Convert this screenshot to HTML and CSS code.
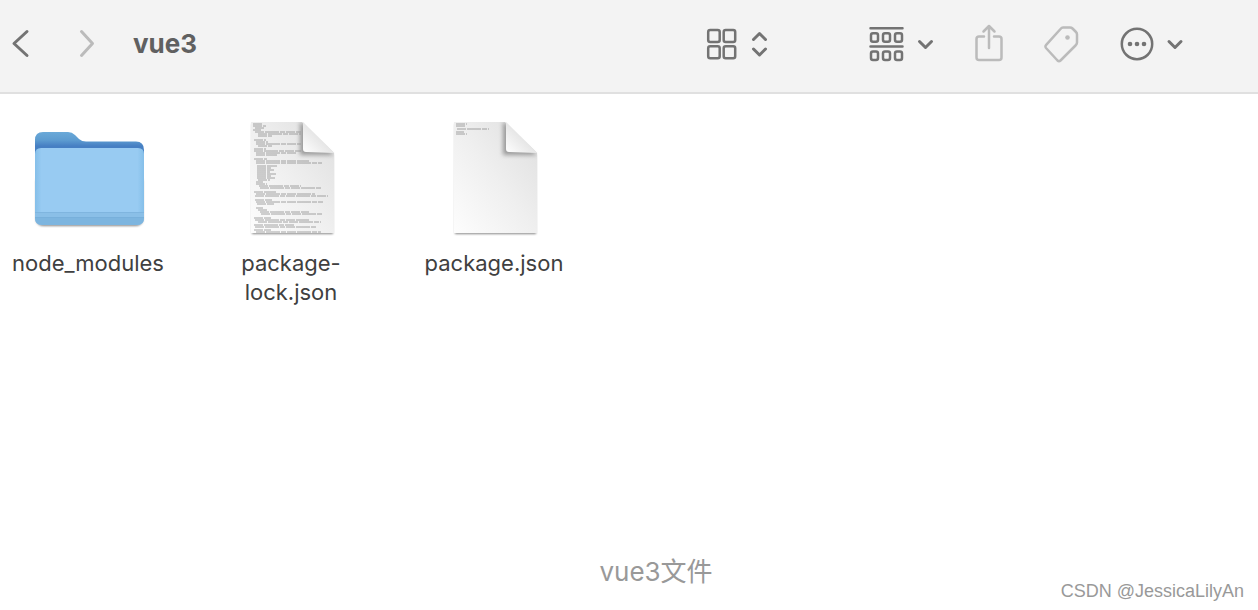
FILE: index.html
```html
<!DOCTYPE html>
<html lang="zh">
    <head>
        <meta charset="utf-8">
        <title>vue3</title>
        <link rel="stylesheet" href="styles.css">
    </head>
    <body>
        <header class="toolbar">
            <nav class="history">
                <button class="tool" aria-label="Back">
                    <svg width="22" height="32" viewBox="0 0 22 32"><path d="M19 3.500L6 15.500L19 27.500"/></svg>
                </button>
                <button class="tool dim" aria-label="Forward">
                    <svg width="22" height="32" viewBox="0 0 22 32"><path d="M5.500 3.500L16.500 15.500L5.500 27.500"/></svg>
                </button>
            </nav>
            <h1 class="title">vue3</h1>
            <div class="actions">
                <button class="tool view" aria-label="View">
                    <svg width="32" height="36" viewBox="0 0 32 36">
                        <rect x="2.200" y="4" width="11.500" height="12" rx="2"/>
                        <rect x="17.700" y="4" width="11.500" height="12" rx="2"/>
                        <rect x="2.200" y="20.200" width="11.500" height="12" rx="2"/>
                        <rect x="17.700" y="20.200" width="11.500" height="12" rx="2"/>
                    </svg>
                    <svg class="arrow" width="18" height="36" viewBox="0 0 18 36"><path d="M3.500 13.500L9.500 7.500L15.500 13.500M3.500 23L9.500 29L15.500 23"/></svg>
                </button>
                <button class="tool group" aria-label="Group">
                    <svg width="36" height="40" viewBox="0 0 36 40">
                        <path d="M2.500 4.200H34.500M2.500 22.400H34.500"/>
                        <rect x="3" y="9.200" width="7" height="8.500" rx="2"/>
                        <rect x="15" y="9.200" width="7" height="8.500" rx="2"/>
                        <rect x="27" y="9.200" width="7" height="8.500" rx="2"/>
                        <rect x="3" y="27.400" width="7" height="8.500" rx="2"/>
                        <rect x="15" y="27.400" width="7" height="8.500" rx="2"/>
                        <rect x="27" y="27.400" width="7" height="8.500" rx="2"/>
                    </svg>
                    <svg class="arrow" width="18" height="36" viewBox="0 0 18 36"><path d="M3.500 15.500L9.500 21.500L15.500 15.500"/></svg>
                </button>
                <button class="tool dim share" aria-label="Share">
                    <svg width="30" height="40" viewBox="0 0 30 40"><path d="M10 12.500H5Q2.500 12.500 2.500 15V33.500Q2.500 36 5 36H25Q27.500 36 27.500 33.500V15Q27.500 12.500 25 12.500H20M15 24V2M9.500 7.500L15 2L20.500 7.500"/></svg>
                </button>
                <button class="tool dim tag" aria-label="Tags">
                    <svg width="36" height="40" viewBox="0 0 36 40">
                        <path d="M19 3.500H26Q27.500 3.500 28.500 4.500L32 8Q33 9 33 10.500V18.500Q33 20 31.500 21.500L16.500 36.500Q15 38 13.500 36.500L2 24Q0.800 22.500 2.200 20.800L16.500 5Q17.700 3.500 19 3.500Z"/>
                        <circle class="dot" cx="23.500" cy="13.500" r="2.300"/>
                    </svg>
                </button>
                <button class="tool more" aria-label="More">
                    <svg width="34" height="36" viewBox="0 0 34 36">
                        <circle cx="17" cy="18" r="15.200"/>
                        <circle class="dot" cx="10" cy="18" r="2.300"/>
                        <circle class="dot" cx="17" cy="18" r="2.300"/>
                        <circle class="dot" cx="24" cy="18" r="2.300"/>
                    </svg>
                    <svg class="arrow" width="18" height="36" viewBox="0 0 18 36"><path d="M3 15.500L9 21.500L15 15.500"/></svg>
                </button>
            </div>
        </header>

        <main class="files">
            <figure class="file">
                <svg width="128" height="124" viewBox="0 0 128 124">
                    <defs>
                        <linearGradient id="tab" x1="0" y1="0" x2="0" y2="1">
                            <stop offset="0" stop-color="#6aa9d8"/>
                            <stop offset=".1" stop-color="#5c9bd0"/>
                            <stop offset=".17" stop-color="#467fc3"/>
                        </linearGradient>
                        <linearGradient id="front" x1="0" y1="0" x2="1" y2="0">
                            <stop offset="0" stop-color="#85bfe9"/>
                            <stop offset=".06" stop-color="#98cbf2"/>
                            <stop offset=".94" stop-color="#98cbf2"/>
                            <stop offset="1" stop-color="#85bfe9"/>
                        </linearGradient>
                    </defs>
                    <rect class="shadow" x="12" y="60" width="107" height="51" rx="7"/>
                    <path fill="url(#tab)" d="M11 25Q11 17 19 17H44Q48 17 51 20L55 24Q58 26.500 62 26.500H112Q120 26.500 120 35V100H11Z"/>
                    <path fill="url(#front)" d="M11 39Q11 33 17 33H114Q120 33 120 39V103Q120 110 113 110H18Q11 110 11 103Z"/>
                    <path fill="#8abfe7" d="M11 97H120V103H11Z"/>
                    <path fill="#7db5df" d="M11 102H120V103Q120 110 113 110H18Q11 110 11 103Z"/>
                    <path fill="#74abd7" d="M11 97H120V98H11ZM11 102H120V103H11Z" opacity=".5"/>
                </svg>
                <figcaption>node_modules</figcaption>
            </figure>
            <figure class="file">
                <svg width="128" height="124" viewBox="0 0 128 124">
                    <defs>
                        <linearGradient id="paper" x1="1" y1="0" x2="0" y2="1">
                            <stop offset="0" stop-color="#dedede"/>
                            <stop offset=".5" stop-color="#efefef"/>
                            <stop offset="1" stop-color="#fdfdfd"/>
                        </linearGradient>
                        <linearGradient id="fold" x1="0" y1="1" x2="1" y2="0">
                            <stop offset="0" stop-color="#fff"/>
                            <stop offset=".5" stop-color="#e6e6e6"/>
                        </linearGradient>
                        <clipPath id="sheet"><path d="M24 7H75L107 38V118H24Z"/></clipPath>
                    </defs>
                    <path class="shadow" d="M25 9H75L106 39V119H25Z"/>
                    <path fill="url(#paper)" d="M24 7H75L107 38V118H24Z"/>
                    <g class="code">
                        <path d="M26 9H36M26 11H39M28 13H37M26 15H34M28 17H74M31 19H74M31 21H45M27 25H39M29 27H41M29 29H74M31 31H45M27 34H39M27 36H74M29 38H70M29 40H50"/>
                        <path d="M27 44H40M29 46H82M29 48H95M30 51H50M30 53H44M30 55H47M30 57H43M30 59H49M30 61H44M30 63H48M31 65H43M29 67H36M29 69H40M32 71H74M33 73H95"/>
                        <path d="M27 77H49M29 79H88M28 81H101M28 85H45M29 87H96M30 89H47M29 93H36M31 95H40M33 97H82M34 99H95"/>
                        <path d="M27 103H44M28 105H82M31 107H94M27 110H67M28 112H90M27 115H44M29 117H94"/>
                    </g>
                    <g clip-path="url(#sheet)"><path class="foldshadow" d="M73 8V40H107L75 7Z"/></g>
                    <path fill="url(#fold)" d="M76 7V34Q76 37 79 37L107 38Z"/>
                </svg>
                <figcaption>package-<br>lock.json</figcaption>
            </figure>
            <figure class="file">
                <svg width="128" height="124" viewBox="0 0 128 124">
                    <path class="shadow" d="M25 9H75L106 39V119H25Z"/>
                    <path fill="url(#paper)" d="M24 7H75L107 38V118H24Z"/>
                    <path class="code" d="M26 9H37M26 11H36M27 14H59M26 17H34M26 19H37"/>
                    <g clip-path="url(#sheet)"><path class="foldshadow" d="M73 8V40H107L75 7Z"/></g>
                    <path fill="url(#fold)" d="M76 7V34Q76 37 79 37L107 38Z"/>
                </svg>
                <figcaption>package.json</figcaption>
            </figure>
        </main>

        <p class="caption">vue3文件</p>
        <div class="watermark">CSDN @JessicaLilyAn</div>
    </body>
</html>
```
FILE: styles.css
```css
* {
    box-sizing: border-box;
}
body {
    margin: 0;
    min-height: 100vh;
    display: flex;
    flex-direction: column;
    position: relative;
    background-color: #fff;
    font-family: Inter, "Liberation Sans", "Noto Sans CJK SC", sans-serif;
}
.toolbar {
    display: flex;
    align-items: center;
    height: 94px;
    padding: 0 74px 4px 8px;
    background-color: #f3f3f3;
    border-bottom: 2px solid #e0e0e0;
}
.history {
    display: flex;
    gap: 46px;
}
.title {
    margin: 0 0 0 35px;
    font-size: 26px;
    font-weight: 700;
    line-height: 32px;
    color: #606060;
}
.actions {
    display: flex;
    align-items: center;
    margin-left: auto;
}
.tool {
    display: flex;
    align-items: center;
    padding: 0;
    border: 0;
    background: none;
    color: #737373;
}
.tool svg {
    fill: none;
    stroke: currentColor;
    stroke-width: 2.5;
    stroke-linecap: round;
    stroke-linejoin: round;
}
.history .tool svg {
    stroke-width: 3;
}
.tool .arrow {
    margin-left: 12px;
    stroke-width: 3;
}
.tool .dot {
    fill: currentColor;
    stroke: none;
}
.tool.dim {
    color: #bbb;
}
.group {
    margin-left: 100px;
}
.share, .tag, .more {
    margin-left: 40px;
}

.files {
    display: flex;
    flex-wrap: wrap;
    gap: 27px;
    padding-top: 21px;
}
.file {
    display: flex;
    flex-direction: column;
    align-items: center;
    gap: 10px;
    width: 176px;
    margin: 0;
    font-size: 22px;
    line-height: 29px;
    text-align: center;
    color: #404040;
}
.shadow {
    fill: #888;
    filter: blur(1px);
}
.code {
    fill: none;
    stroke: #808080;
    stroke-width: 1;
    stroke-dasharray: 9 1 14 1 5 1;
    opacity: .7;
}
.foldshadow {
    fill: #999;
    filter: blur(2px);
}

.caption {
    margin: auto 0 0;
    padding: 0 0 20px 54px;
    font-size: 26px;
    line-height: 36px;
    text-align: center;
    color: #999;
}
.watermark {
    position: absolute;
    right: 14px;
    bottom: 8px;
    font-family: "Liberation Sans", sans-serif;
    font-size: 18px;
    line-height: 22px;
    color: #999;
}
```
